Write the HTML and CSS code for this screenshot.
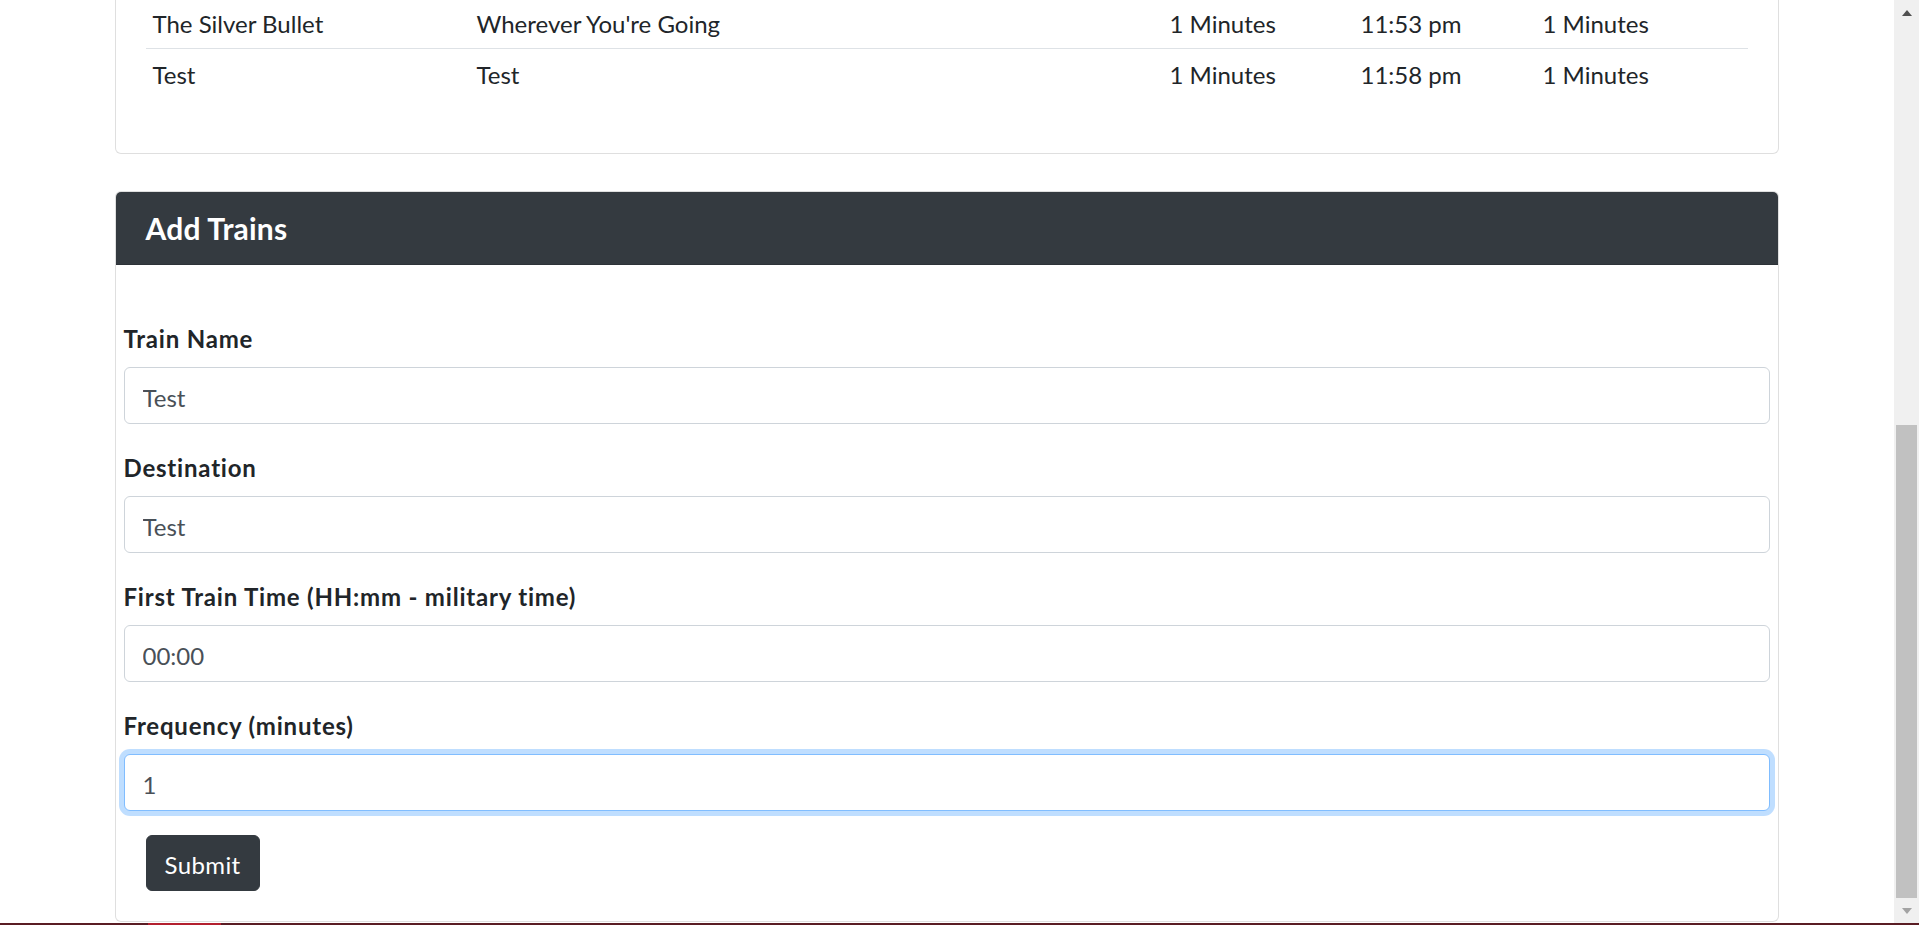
FILE: index.html
```html
<!DOCTYPE html>
<html lang="en">
<head>
<meta charset="utf-8">
<title>Train Scheduler</title>
<link rel="stylesheet" href="styles.css">
</head>
<body>
<div class="screen">
  <div class="viewport">
    <main class="container">
      <section class="card card-list">
        <div class="card-body">
          <table class="table">
            <colgroup>
              <col class="c1"><col class="c2"><col class="c3"><col class="c4"><col class="c5">
            </colgroup>
            <tbody>
              <tr><td>The Silver Bullet</td><td>Wherever You're Going</td><td>1 Minutes</td><td>11:53 pm</td><td>1 Minutes</td></tr>
              <tr><td>Test</td><td>Test</td><td>1 Minutes</td><td>11:58 pm</td><td>1 Minutes</td></tr>
            </tbody>
          </table>
        </div>
      </section>
      <section class="card card-add">
        <div class="card-header"><h5 class="card-title">Add Trains</h5></div>
        <form class="card-form">
          <div class="form-group">
            <label for="train-name">Train Name</label>
            <input class="form-control" id="train-name" type="text" value="Test">
          </div>
          <div class="form-group">
            <label for="destination">Destination</label>
            <input class="form-control" id="destination" type="text" value="Test">
          </div>
          <div class="form-group">
            <label for="first-time">First Train Time (HH:mm - military time)</label>
            <input class="form-control" id="first-time" type="text" value="00:00">
          </div>
          <div class="form-group">
            <label for="frequency">Frequency (minutes)</label>
            <input class="form-control is-focused" id="frequency" type="text" value="1">
          </div>
          <button class="btn btn-dark" type="button">Submit</button>
        </form>
      </section>
    </main>
    <div class="scrollbar">
      <div class="sb-btn"><span class="arrow-up"></span></div>
      <div class="sb-track"><div class="sb-thumb"></div></div>
      <div class="sb-btn"><span class="arrow-down"></span></div>
    </div>
  </div>
  <div class="taskbar-edge"><span class="tb-accent"></span></div>
</div>
</body>
</html>
```
FILE: styles.css
```css
html, body {
  margin: 0;
  padding: 0;
  height: 100%;
  overflow: hidden;
}

body {
  font-family: Lato, "Noto Sans", "Liberation Sans", sans-serif;
  font-size: 24px;
  line-height: 36px;
  color: #212529;
  background: #fff;
}

.screen {
  height: 925px;
  display: flex;
  flex-direction: column;
}

.viewport {
  flex: 1;
  display: flex;
  min-height: 0;
  overflow: hidden;
}

.container {
  flex: 1;
  display: flex;
  flex-direction: column;
  align-items: center;
  min-width: 0;
  padding-right: 1px;
}

.card {
  width: 1664px;
  box-sizing: border-box;
  border: 1px solid rgba(0, 0, 0, 0.125);
  border-radius: 6px;
  background: #fff;
  flex-shrink: 0;
}

.card-list {
  margin-top: -34px;
}

.card-body {
  padding: 30px;
}

.table {
  width: 100%;
  border-collapse: collapse;
  table-layout: fixed;
  margin-bottom: 24px;
}

.table .c1 { width: 324px; }
.table .c2 { width: 693px; }
.table .c3 { width: 191px; }
.table .c4 { width: 182px; }
.table .c5 { width: auto; }

.table td {
  padding: 8px 7px 6px;
  border-top: 1px solid #dee2e6;
  vertical-align: top;
  white-space: nowrap;
}

.card-add {
  margin-top: 37px;
}

.card-header {
  background: #343a40;
  color: #fff;
  padding: 18px 30px;
  border-bottom: 1px solid rgba(0, 0, 0, 0.125);
  border-radius: 5px 5px 0 0;
}

.card-title {
  margin: 0;
  font-size: 30px;
  line-height: 36px;
  font-weight: 700;
  letter-spacing: 0.2px;
}

.card-form {
  padding: 54px 8px 30px 8px;
}

.form-group {
  margin-bottom: 24px;
}

.form-group label {
  display: inline-block;
  padding-top: 2px;
  margin-bottom: 10px;
  font-weight: 700;
  letter-spacing: 0.8px;
}

.form-control {
  display: block;
  width: 100%;
  height: 57px;
  box-sizing: border-box;
  padding: 11px 18px 8px;
  font-family: inherit;
  font-size: 24px;
  line-height: 36px;
  color: #495057;
  background: #fff;
  border: 1px solid #ced4da;
  border-radius: 6px;
  outline: none;
}

.form-control.is-focused {
  border-color: #80bdff;
  box-shadow: 0 0 0 5px rgba(0, 123, 255, 0.25);
}

.btn {
  margin-left: 22px;
  font-family: inherit;
  font-size: 24px;
  line-height: 36px;
  letter-spacing: 0.4px;
  padding: 11px 18px 7px;
  border-radius: 6px;
  cursor: pointer;
}

.btn-dark {
  color: #fff;
  background: #343a40;
  border: 1px solid #343a40;
}

.scrollbar {
  width: 25px;
  flex-shrink: 0;
  background: #f0f0f0;
  display: flex;
  flex-direction: column;
}

.sb-btn {
  height: 25px;
  display: flex;
  align-items: center;
  justify-content: center;
  flex-shrink: 0;
}

.arrow-up {
  width: 0;
  height: 0;
  border-left: 5px solid transparent;
  border-right: 5px solid transparent;
  border-bottom: 6px solid #505050;
}

.arrow-down {
  width: 0;
  height: 0;
  border-left: 5px solid transparent;
  border-right: 5px solid transparent;
  border-top: 6px solid #a3a3a3;
}

.sb-track {
  flex: 1;
  display: flex;
  flex-direction: column;
  justify-content: flex-end;
  padding: 0 2px;
}

.sb-thumb {
  height: 473px;
  background: #c1c1c1;
}

.taskbar-edge {
  height: 2px;
  background: #5a1d24;
  display: flex;
}

.tb-accent {
  margin-left: 148px;
  width: 73px;
  background: #b3202f;
}
```
